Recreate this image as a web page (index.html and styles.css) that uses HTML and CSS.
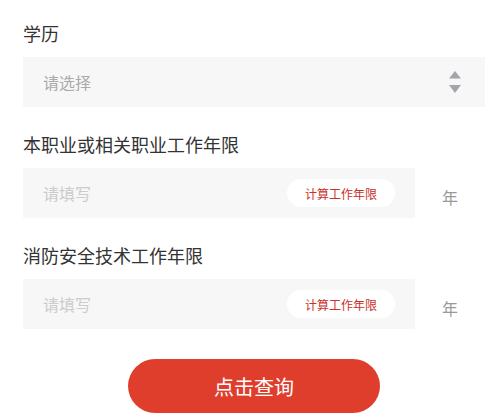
FILE: index.html
```html
<!DOCTYPE html>
<html lang="zh">
<head>
<meta charset="utf-8">
<link rel="stylesheet" href="styles.css">
</head>
<body>
<div class="form">
  <div class="field">
    <div class="label">学历</div>
    <div class="box select">
      <span class="ph ph-select">请选择</span>
      <svg class="arrows" width="12" height="22" viewBox="0 0 12 22">
        <path d="M6 0 L12 7.5 L0 7.5 Z" fill="#a2a5a9"/>
        <path d="M0 14 L12 14 L6 22 Z" fill="#a2a5a9"/>
      </svg>
    </div>
  </div>
  <div class="field">
    <div class="label">本职业或相关职业工作年限</div>
    <div class="row">
      <div class="box input">
        <span class="ph">请填写</span>
        <span class="pill">计算工作年限</span>
      </div>
      <span class="unit">年</span>
    </div>
  </div>
  <div class="field">
    <div class="label">消防安全技术工作年限</div>
    <div class="row">
      <div class="box input">
        <span class="ph">请填写</span>
        <span class="pill">计算工作年限</span>
      </div>
      <span class="unit">年</span>
    </div>
  </div>
  <div class="actions">
    <button class="submit">点击查询</button>
  </div>
</div>
</body>
</html>
```
FILE: styles.css
```css
html, body {
  margin: 0;
  padding: 0;
  background: #fff;
}
body {
  font-family: "Noto Sans CJK SC", "Noto Sans", sans-serif;
  color: #333;
}
.form {
  padding: 21px 13px 0 23px;
}
.field {
  margin-bottom: 25px;
}
.field:nth-child(3) {
  margin-bottom: 30px;
}
.label {
  font-size: 18px;
  line-height: 24px;
  margin-bottom: 12px;
  color: #333;
}
.box {
  height: 50px;
  background: #f7f7f7;
  display: flex;
  align-items: center;
  justify-content: space-between;
  box-sizing: border-box;
}
.select {
  padding: 0 24px 0 20px;
}
.input {
  flex: 1;
  padding: 0 20px 0 20px;
}
.ph {
  font-size: 16px;
  color: #cccccc;
}
.ph-select {
  color: #aaaaaa;
}
.arrows {
  display: block;
}
.row {
  display: flex;
  align-items: center;
}
.pill {
  height: 28px;
  width: 108px;
  border-radius: 14px;
  background: #fff;
  font-size: 12px;
  color: #c9302a;
  display: flex;
  align-items: center;
  justify-content: center;
}
.unit {
  width: 70px;
  text-align: center;
  font-size: 16px;
  color: #999;
  padding-top: 8px;
}
.actions {
  display: flex;
  justify-content: center;
}
.submit {
  width: 252px;
  height: 54px;
  border: none;
  border-radius: 27px;
  background: #e03e2d;
  color: #fff;
  font-family: "Noto Sans CJK SC", "Noto Sans", sans-serif;
  font-size: 20px;
  padding: 0;
}
```
